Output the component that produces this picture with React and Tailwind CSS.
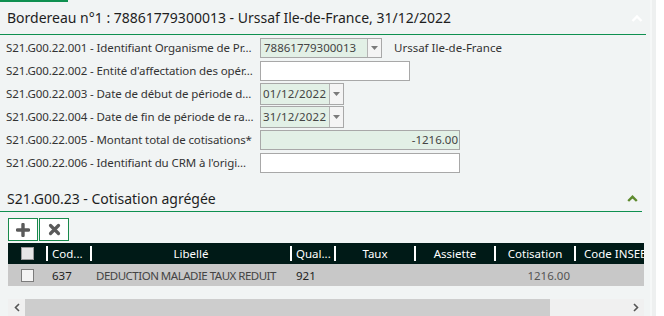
import React from "react";

const font = { fontFamily: '"Noto Sans", "Open Sans", sans-serif' };

const fields = [
  { label: "S21.G00.22.001 - Identifiant Organisme de Pr...", kind: "combo", value: "78861779300013", extra: "Urssaf Ile-de-France" },
  { label: "S21.G00.22.002 - Entité d'affectation des opér...", kind: "text", width: "w-[150px]" },
  { label: "S21.G00.22.003 - Date de début de période d...", kind: "date", value: "01/12/2022" },
  { label: "S21.G00.22.004 - Date de fin de période de ra...", kind: "date", value: "31/12/2022" },
  { label: "S21.G00.22.005 - Montant total de cotisations*", kind: "amount", value: "-1216.00" },
  { label: "S21.G00.22.006 - Identifiant du CRM à l'origi...", kind: "text", width: "w-[200px]" },
];

function Arrow() {
  return (
    <div className="flex h-full w-[14px] shrink-0 items-center justify-center border-l border-[#b4b4b4] bg-[#f4f4f4]">
      <svg width="7" height="4" viewBox="0 0 7 4">
        <polygon points="0,0 7,0 3.5,4" fill="#7a7a7a" />
      </svg>
    </div>
  );
}

function Field({ f }) {
  if (f.kind === "combo") {
    return (
      <div className="flex items-center">
        <div className="flex h-[20px] w-[122px] items-center border border-[#a8a8a8] bg-[#e2f0e6]">
          <span className="flex-1 whitespace-nowrap pl-[3px] text-[11.5px] text-[#444]">{f.value}</span>
          <Arrow />
        </div>
        <span className="ml-[12px] whitespace-nowrap text-[11.5px] text-[#333]">{f.extra}</span>
      </div>
    );
  }
  if (f.kind === "date") {
    return (
      <div className="flex h-[22px] w-[84px] items-center border border-[#a8a8a8] bg-[#e2f0e6]">
        <span className="flex-1 whitespace-nowrap pl-[2px] text-[11.5px] tracking-[0.2px] text-[#444]">{f.value}</span>
        <Arrow />
      </div>
    );
  }
  if (f.kind === "amount") {
    return (
      <div className="flex h-[20px] w-[200px] items-center justify-end border border-[#a8a8a8] bg-[#e2f0e6] pr-[1px] text-[11.5px] text-[#444]">
        {f.value}
      </div>
    );
  }
  return <div className={`h-[20px] ${f.width} border border-[#a8a8a8] bg-white`} />;
}

function Check({ header }) {
  return (
    <div
      className={
        header
          ? "h-[13px] w-[13px] border border-[#9a9a9a] bg-[#e6e6e6]"
          : "h-[13px] w-[13px] border border-[#7c7c7c] bg-[#f4f4f4]"
      }
    />
  );
}

function Sep() {
  return <div className="h-[15px] w-[2px] shrink-0 bg-white" />;
}

export default function App() {
  return (
    <div className="flex h-[316px] w-[664px] overflow-hidden bg-white" style={font}>
      <div className="flex w-[650px] flex-col bg-[#f1f4f4]">
        <div className="h-[2px] w-[68px] bg-[#0f9050]" />

        <div className="flex h-[32px] items-center justify-between pl-[7px] pr-[7px]">
          <span className="whitespace-nowrap text-[14px] text-[#1e1e1e]">
            Bordereau n°1 : 78861779300013 - Urssaf Ile-de-France, 31/12/2022
          </span>
          <svg width="12" height="7" viewBox="0 0 12 7" className="mt-[2px]">
            <polyline points="1.5,6 6,1.5 10.5,6" fill="none" stroke="#ffffff" strokeWidth="2.4" />
          </svg>
        </div>
        <div className="h-px w-[646px] bg-[#0f9050]" />

        <div className="flex flex-col pt-[1.5px]">
          {fields.map((f) => (
            <div key={f.label} className="flex h-[23px] items-center">
              <span className="w-[260px] shrink-0 overflow-hidden whitespace-nowrap pl-[6px] text-[11.5px] tracking-[-0.1px] text-[#333]">
                {f.label}
              </span>
              <Field f={f} />
            </div>
          ))}
        </div>

        <div className="mt-[11px] flex h-[26px] items-center justify-between pl-[7px] pr-[12px]">
          <span className="whitespace-nowrap text-[14px] text-[#1e1e1e]">S21.G00.23 - Cotisation agrégée</span>
          <svg width="11" height="7" viewBox="0 0 11 7">
            <polyline points="1.2,6 5.5,1.8 9.8,6" fill="none" stroke="#5e8a2e" strokeWidth="2.4" />
          </svg>
        </div>
        <div className="h-px w-[642px] bg-[#0f9050]" />

        <div className="ml-[8px] mt-[6px] flex gap-[1px]">
          <button className="flex h-[23px] w-[30px] items-center justify-center border border-[#188a4c] bg-white">
            <svg width="14" height="14" viewBox="0 0 14 14">
              <path d="M7 1.5v11M1.5 7h11" stroke="#5a5a5a" strokeWidth="3.4" strokeLinecap="round" />
            </svg>
          </button>
          <button className="flex h-[23px] w-[30px] items-center justify-center border border-[#188a4c] bg-white">
            <svg width="13" height="13" viewBox="0 0 13 13">
              <path d="M2.5 2.5l8 8M10.5 2.5l-8 8" stroke="#5a5a5a" strokeWidth="3.2" strokeLinecap="round" />
            </svg>
          </button>
        </div>

        <div className="ml-[8px] mt-[2px] w-[636px] overflow-hidden">
          <div className="flex h-[21px] items-center whitespace-nowrap bg-[#001a17] text-[11.5px] text-white">
            <div className="flex w-[40px] shrink-0 items-center justify-between pl-[13px]">
              <Check header />
              <Sep />
            </div>
            <div className="flex w-[44px] shrink-0 items-center justify-between pl-[4px]">
              <span>Cod...</span>
              <Sep />
            </div>
            <div className="flex w-[200px] shrink-0 items-center">
              <span className="flex-1 text-center">Libellé</span>
              <Sep />
            </div>
            <div className="flex w-[44px] shrink-0 items-center justify-between pl-[4px]">
              <span>Qual...</span>
              <Sep />
            </div>
            <div className="flex w-[80px] shrink-0 items-center">
              <span className="flex-1 text-center">Taux</span>
              <Sep />
            </div>
            <div className="flex w-[80px] shrink-0 items-center">
              <span className="flex-1 text-center">Assiette</span>
              <Sep />
            </div>
            <div className="flex w-[80px] shrink-0 items-center">
              <span className="flex-1 text-center">Cotisation</span>
              <Sep />
            </div>
            <div className="flex-1 pl-[8px]">Code INSEE</div>
          </div>
          <div className="flex h-[22px] items-center whitespace-nowrap bg-[#c8c8c8] text-[11.5px] text-[#333]">
            <div className="w-[40px] shrink-0 pl-[13px]">
              <Check />
            </div>
            <div className="w-[44px] shrink-0 pl-[4px] text-[#222]">637</div>
            <div className="w-[200px] shrink-0 pl-[4px] tracking-[-0.5px] text-[#444]">DEDUCTION MALADIE TAUX REDUIT</div>
            <div className="w-[44px] shrink-0 pl-[4px] text-[#222]">921</div>
            <div className="w-[80px] shrink-0" />
            <div className="w-[80px] shrink-0" />
            <div className="w-[80px] shrink-0 pr-[6px] text-right text-[#555]">1216.00</div>
            <div className="flex-1" />
          </div>
        </div>

        <div className="ml-[8px] mt-[13px] flex h-[17px] w-[636px] items-center bg-[#f0f0f0]">
          <div className="flex w-[17px] items-center justify-center">
            <svg width="6" height="9" viewBox="0 0 6 9">
              <polyline points="5,1 1.5,4.5 5,8" fill="none" stroke="#555" strokeWidth="1.6" />
            </svg>
          </div>
          <div className="h-full w-[525px] bg-[#cdcdcd]" />
          <div className="flex flex-1 items-center justify-end pr-[5px]">
            <svg width="6" height="9" viewBox="0 0 6 9">
              <polyline points="1,1 4.5,4.5 1,8" fill="none" stroke="#555" strokeWidth="1.6" />
            </svg>
          </div>
        </div>
      </div>
      <div className="w-[2px] bg-[#f6f8f8]" />
      <div className="w-[4px] bg-[#eef0f0]" />
      <div className="flex-1 bg-white" />
    </div>
  );
}
